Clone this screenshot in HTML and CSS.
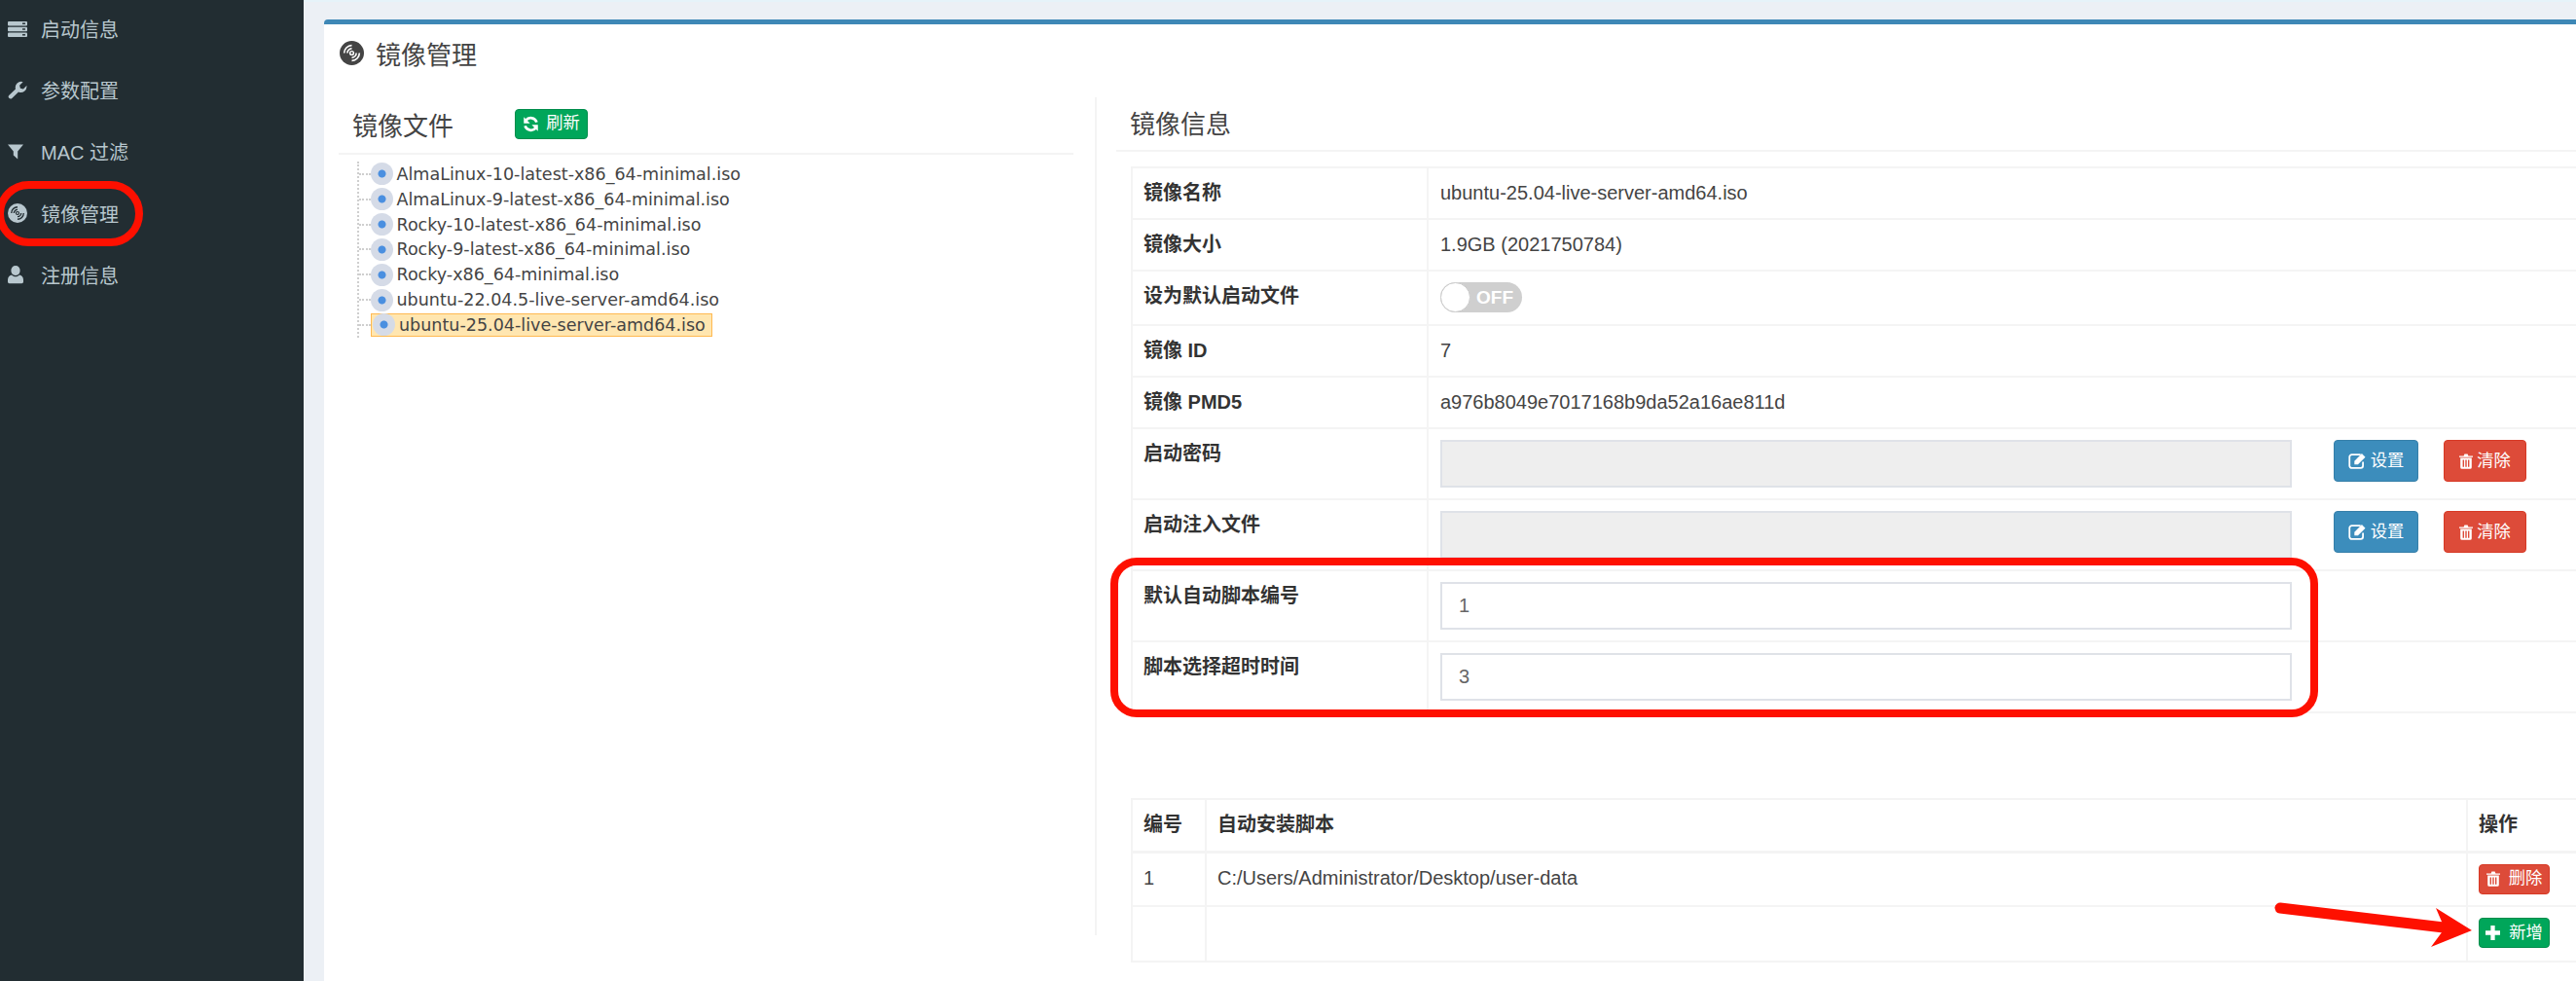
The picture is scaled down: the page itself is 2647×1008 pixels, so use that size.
FILE: index.html
```html
<!DOCTYPE html>
<html lang="zh-CN">
<head>
<meta charset="utf-8">
<title>镜像管理</title>
<link rel="stylesheet" href="styles.css">
</head>
<body>
<svg class="defs" aria-hidden="true">
  <symbol id="i-disc" viewBox="0 0 24 24">
    <circle cx="12" cy="12" r="12" fill="currentColor"/>
    <path class="cut" d="M12 4.5A7.5 7.5 0 0 0 4.5 12M12 7.6A4.4 4.4 0 0 0 7.6 12M12 19.5A7.5 7.5 0 0 0 19.5 12M12 16.4A4.4 4.4 0 0 0 16.4 12" fill="none" stroke-width="1.6"/>
    <circle class="cut" cx="12" cy="12" r="1.8" fill="none" stroke-width="1.4"/>
  </symbol>
  <symbol id="i-refresh" viewBox="0 0 16 16">
    <path d="M13.6 6.2A6 6 0 0 0 3.2 4.4" fill="none" stroke="currentColor" stroke-width="2.6"/>
    <path d="M1.2 1.2v6h6z" fill="currentColor"/>
    <path d="M2.4 9.8a6 6 0 0 0 10.4 1.8" fill="none" stroke="currentColor" stroke-width="2.6"/>
    <path d="M14.8 14.8v-6h-6z" fill="currentColor"/>
  </symbol>
  <symbol id="i-edit" viewBox="0 0 18 16">
    <path d="M12 2H3.5A2.2 2.2 0 0 0 1.2 4.2v8.6A2.2 2.2 0 0 0 3.5 15h8.6a2.2 2.2 0 0 0 2.2-2.2V9" fill="none" stroke="currentColor" stroke-width="1.7"/>
    <path d="M6 8.2 13.2 1l3.4 3.4-7.2 7.2H6z" fill="currentColor"/>
  </symbol>
  <symbol id="i-trash" viewBox="0 0 14 16">
    <path d="M4.6 2.4 5.4.6h3.2l.8 1.8H14v1.4H0V2.4z" fill="currentColor"/>
    <path fill-rule="evenodd" d="M1.2 4.6h11.6v9.6a1.6 1.6 0 0 1-1.6 1.6H2.8a1.6 1.6 0 0 1-1.6-1.6zM3.6 6.4v7.4h1.4V6.4zM6.3 6.4v7.4h1.4V6.4zM9 6.4v7.4h1.4V6.4z" fill="currentColor"/>
  </symbol>
  <symbol id="i-plus" viewBox="0 0 14 14">
    <path d="M5 0h4v5h5v4H9v5H5V9H0V5h5z" fill="currentColor"/>
  </symbol>
</svg>

<div class="app">
  <nav class="sidebar">
    <a class="nav-item">
      <svg class="nav-icon" viewBox="0 0 20 16"><g fill="currentColor"><rect y="0" width="20" height="4.4" rx="1"/><rect y="5.8" width="20" height="4.4" rx="1"/><rect y="11.6" width="20" height="4.4" rx="1"/></g><g fill="#222d32"><rect x="15" y="1.5" width="3" height="1.4"/><rect x="15" y="7.3" width="3" height="1.4"/><rect x="15" y="13.1" width="3" height="1.4"/></g></svg>
      <span>启动信息</span>
    </a>
    <a class="nav-item">
      <svg class="nav-icon" viewBox="0 0 20 20"><path fill="currentColor" d="M19.4 5l-3.5 3.5-3-.8-.8-3 3.5-3.5A6 6 0 0 0 8 8.5L1.2 14.9a2.2 2.2 0 0 0 3.1 3.1L11 11.4A6 6 0 0 0 19.4 5z"/></svg>
      <span>参数配置</span>
    </a>
    <a class="nav-item">
      <svg class="nav-icon" viewBox="0 0 20 20"><path fill="currentColor" d="M0 2.500h16L10.200 9.500V17.600L5.800 13.600V9.500z"/></svg>
      <span>MAC 过滤</span>
    </a>
    <a class="nav-item">
      <svg class="nav-icon disc-nav"><use href="#i-disc"/></svg>
      <span>镜像管理</span>
    </a>
    <a class="nav-item">
      <svg class="nav-icon" viewBox="0 0 20 20"><path fill="currentColor" d="M8 1a4.600 4.600 0 0 1 4.600 5A5 5 0 0 1 8 11a5 5 0 0 1-4.600-5A4.600 4.600 0 0 1 8 1zM4 10.400c1 1.200 2.400 1.800 4 1.800s3-.6 4-1.800c2 .2 4 2 4 5.200v2c0 1-.8 1.600-1.600 1.600H1.600c-.8 0-1.600-.6-1.600-1.600v-2c0-3.200 2-5 4-5.200z"/></svg>
      <span>注册信息</span>
    </a>
  </nav>

  <main class="main">
    <section class="box">
      <h1 class="box-title">
        <svg class="title-icon"><use href="#i-disc"/></svg>
        <span>镜像管理</span>
      </h1>
      <div class="columns">
        <div class="col-files">
          <div class="files-head">
            <h2 class="section-title">镜像文件</h2>
            <button class="btn btn-green btn-refresh"><svg class="btn-icon"><use href="#i-refresh"/></svg>刷新</button>
          </div>
          <ul class="tree">
            <li class="tree-item"><span class="tree-node"><i class="tree-disc"></i>AlmaLinux-10-latest-x86_64-minimal.iso</span></li>
            <li class="tree-item"><span class="tree-node"><i class="tree-disc"></i>AlmaLinux-9-latest-x86_64-minimal.iso</span></li>
            <li class="tree-item"><span class="tree-node"><i class="tree-disc"></i>Rocky-10-latest-x86_64-minimal.iso</span></li>
            <li class="tree-item"><span class="tree-node"><i class="tree-disc"></i>Rocky-9-latest-x86_64-minimal.iso</span></li>
            <li class="tree-item"><span class="tree-node"><i class="tree-disc"></i>Rocky-x86_64-minimal.iso</span></li>
            <li class="tree-item"><span class="tree-node"><i class="tree-disc"></i>ubuntu-22.04.5-live-server-amd64.iso</span></li>
            <li class="tree-item"><span class="tree-node selected"><i class="tree-disc"></i>ubuntu-25.04-live-server-amd64.iso</span></li>
          </ul>
        </div>
        <div class="col-info">
          <h2 class="section-title info-head">镜像信息</h2>
          <table class="grid info-table">
            <tr><th>镜像名称</th><td>ubuntu-25.04-live-server-amd64.iso</td></tr>
            <tr><th>镜像大小</th><td>1.9GB (2021750784)</td></tr>
            <tr class="toggle-row"><th>设为默认启动文件</th><td><span class="toggle"><i class="toggle-knob"></i><b class="toggle-label">OFF</b></span></td></tr>
            <tr><th>镜像 ID</th><td>7</td></tr>
            <tr><th>镜像 PMD5</th><td>a976b8049e7017168b9da52a16ae811d</td></tr>
            <tr><th>启动密码</th><td><div class="field-row"><input class="field" disabled><button class="btn btn-blue btn-set"><svg class="btn-icon icon-edit"><use href="#i-edit"/></svg>设置</button><button class="btn btn-red btn-clear"><svg class="btn-icon icon-trash"><use href="#i-trash"/></svg>清除</button></div></td></tr>
            <tr><th>启动注入文件</th><td><div class="field-row"><input class="field" disabled><button class="btn btn-blue btn-set"><svg class="btn-icon icon-edit"><use href="#i-edit"/></svg>设置</button><button class="btn btn-red btn-clear"><svg class="btn-icon icon-trash"><use href="#i-trash"/></svg>清除</button></div></td></tr>
            <tr><th>默认自动脚本编号</th><td><div class="field-row"><input class="field" value="1"></div></td></tr>
            <tr><th>脚本选择超时时间</th><td><div class="field-row"><input class="field" value="3"></div></td></tr>
          </table>
          <table class="grid script-table">
            <colgroup><col class="c-num"><col class="c-path"><col class="c-op"></colgroup>
            <thead><tr><th>编号</th><th>自动安装脚本</th><th>操作</th></tr></thead>
            <tbody>
              <tr><td>1</td><td>C:/Users/Administrator/Desktop/user-data</td><td><button class="btn btn-red btn-row"><svg class="btn-icon icon-trash"><use href="#i-trash"/></svg>删除</button></td></tr>
              <tr><td></td><td></td><td><button class="btn btn-green btn-row"><svg class="btn-icon icon-plus"><use href="#i-plus"/></svg>新增</button></td></tr>
            </tbody>
          </table>
        </div>
      </div>
    </section>
  </main>
</div>

<div class="mark mark-nav"></div>
<div class="mark mark-fields"></div>
<svg class="mark-arrow" viewBox="0 0 210 50">
  <path d="M7 7 175 27" fill="none" stroke="#fe1000" stroke-width="11" stroke-linecap="round"/>
  <path d="M167 7 204 30 162 47 176 28z" fill="#fe1000"/>
</svg>
</body>
</html>
```
FILE: styles.css
```css
* { box-sizing: border-box; }
html, body { margin: 0; height: 100%; }
body {
  width: 2647px;
  height: 1008px;
  position: relative;
  overflow: hidden;
  font-family: "Liberation Sans", "Noto Sans CJK SC", sans-serif;
  font-size: 20px;
  color: #333;
  background: #ecf0f5;
}
.defs { display: none; }
.app { display: flex; height: 1008px; }

/* sidebar */
.sidebar {
  flex: 0 0 312px;
  background: #222d32;
  color: #b8c7ce;
}
.nav-item {
  display: flex;
  align-items: center;
  height: 63.2px;
  padding-left: 8px;
  gap: 14px;
}
.nav-item:first-child { margin-top: -2px; }
.nav-icon { width: 20px; height: 20px; flex: none; }
.disc-nav { --cut: #222d32; }
.cut { stroke: var(--cut); }

/* main */
.main {
  flex: 1;
  min-width: 0;
  padding: 18px 0 0 21px;
  border-top: 2px solid #e6f3f9;
  overflow: hidden;
}
.box {
  width: 2340px;
  height: 990px;
  background: #fff;
  border-top: 5px solid #3e88b6;
  border-radius: 4px 0 0 0;
  padding-left: 15px;
}
.box-title {
  display: flex;
  align-items: center;
  gap: 12px;
  height: 58px;
  margin: 0;
  font-size: 26px;
  font-weight: 400;
  color: #444;
  padding: 0 0 0 1px;
}
.title-icon { width: 25px; height: 25px; color: #444; --cut: #fff; flex: none; }

.columns { display: flex; margin-top: 17px; }
.col-files { flex: 0 0 755px; margin-right: 22px; }
.col-info {
  flex: 0 0 1400px;
  height: 861px;
  border-left: 2px solid #f4f4f4;
  padding-left: 20px;
}
.section-title { margin: 0; font-size: 26px; font-weight: 400; color: #444; }

.files-head {
  display: flex;
  align-items: center;
  gap: 63px;
  height: 59px;
  padding: 0 0 3px 14px;
  border-bottom: 2px solid #f4f4f4;
}

/* tree */
.tree {
  list-style: none;
  margin: 7px 0 0 19px;
  padding: 0;
  height: 181px;
  border-left: 2px dotted #cfcfcf;
  font-family: "DejaVu Sans", sans-serif;
  font-size: 17.55px;
  color: #444;
}
.tree-item {
  display: flex;
  align-items: center;
  height: 25.83px;
  padding-left: 12px;
}
.tree-item::before {
  content: "";
  width: 12px;
  margin-left: -12px;
  border-top: 2px dotted #cfcfcf;
  flex: none;
}
.tree-node {
  display: inline-flex;
  align-items: center;
  height: 24px;
  gap: 3.5px;
  white-space: nowrap;
}
.tree-disc {
  width: 23px;
  height: 23px;
  border-radius: 50%;
  flex: none;
  background: radial-gradient(circle, #4a8fe0 0 3.5px, #d5dbe7 4.5px);
}
.tree-node.selected {
  height: 24px;
  padding: 0 6px 0 1px;
  gap: 4px;
  background: #ffe6b0;
  border: 1px solid #ffb951;
}

/* right column */
.info-head {
  height: 56px;
  padding: 7px 0 0 14px;
  border-bottom: 2px solid #f4f4f4;
}
.grid {
  border-collapse: collapse;
  margin-left: 15px;
  table-layout: fixed;
  width: 1500px;
}
.grid th, .grid td {
  border: 2px solid #f4f4f4;
  padding: 11px 12px;
  line-height: 29px;
  text-align: left;
  vertical-align: top;
}
.grid td { color: #444; }
.grid th { font-weight: 700; padding-left: 11px; }
.info-table { margin-top: 15px; }
.info-table th { width: 304px; }
.toggle-row th, .toggle-row td { padding-bottom: 12px; }
.toggle {
  display: block;
  position: relative;
  width: 84px;
  height: 31px;
  border-radius: 16px;
  background: #cfcfcf;
  color: #fff;
}
.toggle-knob {
  position: absolute;
  left: 0;
  top: 0;
  width: 31px;
  height: 31px;
  border-radius: 50%;
  background: #fff;
  border: 1px solid #ccc;
}
.toggle-label {
  position: absolute;
  left: 37px;
  top: 0;
  line-height: 31px;
  font-size: 19px;
}
.field-row { display: flex; align-items: flex-start; }
.field {
  width: 875px;
  height: 49px;
  padding: 0 17px;
  margin: 0 43px 0 0;
  border: 2px solid #dfe2e8;
  border-radius: 0;
  background: #fff;
  font: inherit;
  color: #666;
  outline: none;
}
.field:disabled { background: #eee; }

.btn {
  display: inline-flex;
  align-items: center;
  justify-content: center;
  padding: 0;
  border: 1px solid transparent;
  border-radius: 4px;
  color: #fff;
  font-family: inherit;
  font-size: 17.3px;
  line-height: 1;
}
.btn-green { background: #00a65a; border-color: #008d4c; }
.btn-blue { background: #3c8dbc; border-color: #367fa9; }
.btn-red { background: #dd4b39; border-color: #d73925; }
.btn-icon { flex: none; }
.btn-refresh { width: 75px; height: 31px; gap: 7px; }
.btn-refresh .btn-icon { width: 17px; height: 17px; }
.btn-set { width: 87px; height: 43px; gap: 4px; margin-right: 26px; }
.btn-clear { width: 85px; height: 43px; gap: 4px; }
.icon-edit { width: 19px; height: 17px; }
.icon-trash { width: 14px; height: 16px; }
.btn-row { width: 73px; height: 31px; gap: 9px; }
.icon-plus { width: 15px; height: 15px; }

.script-table { margin-top: 87px; }
.script-table td { padding-left: 11px; }
.c-num { width: 76px; }
.c-path { width: 1296px; }
.c-op { width: 128px; }
.script-table thead th { border-bottom-width: 3px; height: 54px; }
.script-table tbody tr:first-child td { height: 56px; }
.script-table tbody tr:last-child td { height: 57px; }

/* annotations drawn over the screenshot */
.mark {
  position: absolute;
  border: 8px solid #fe1000;
}
.mark-nav { left: -4px; top: 186px; width: 151px; height: 67px; border-radius: 34px; }
.mark-fields { left: 1141px; top: 573px; width: 1241px; height: 164px; border-radius: 27px; }
.mark-arrow {
  position: absolute;
  left: 2336px;
  top: 926px;
  width: 210px;
  height: 50px;
}
```
